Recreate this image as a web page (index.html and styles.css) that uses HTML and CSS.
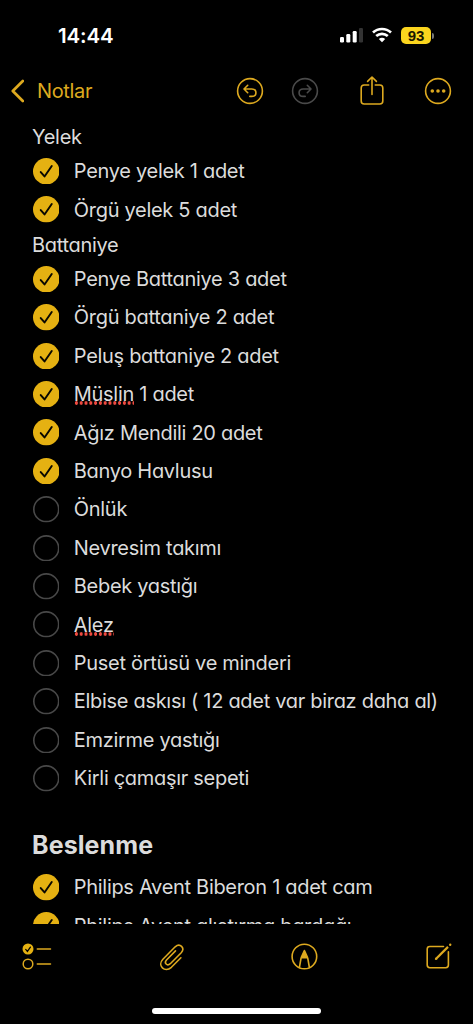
FILE: index.html
```html
<!DOCTYPE html>
<html lang="tr">
<head>
<meta charset="utf-8">
<title>Notlar</title>
<link rel="stylesheet" href="styles.css">
</head>
<body>
<svg width="0" height="0" class="defs">
  <symbol id="done" viewBox="0 0 26 26"><circle cx="13" cy="13" r="13" fill="#e5b112"/><path d="M7.6 13.8l3.7 4.3 7.1-10.3" fill="none" stroke="#0a0800" stroke-width="1.9" stroke-linecap="round" stroke-linejoin="round"/></symbol>
  <symbol id="open" viewBox="0 0 26 26"><circle cx="13" cy="13" r="12.2" fill="none" stroke="#484848" stroke-width="1.6"/></symbol>
</svg>
<div class="screen">
  <header class="status">
    <span class="clock">14:44</span>
    <div class="indicators">
      <svg class="signal" width="24" height="16" viewBox="0 0 24 16" fill="#fff"><rect x="1" y="10" width="4" height="5.5" rx="1.2"/><rect x="7.3" y="7" width="4" height="8.5" rx="1.2"/><rect x="13.7" y="4" width="4" height="11.5" rx="1.2"/><rect x="20" y="1" width="4" height="14.5" rx="1.2" fill="#333"/></svg>
      <svg class="wifi" width="20" height="16" viewBox="0 0 20 16" fill="none" stroke="#fff" stroke-width="2.7"><path d="M1 5.5C6.1.8 13.9.8 19 5.5M4.2 9.1c3.4-3 8.2-3 11.6 0"/><path d="M6.8 11.9c2-1.6 4.4-1.6 6.4 0L10 15.3z" fill="#fff" stroke="none"/></svg>
      <div class="battery"><span class="level">93</span><i class="cap"></i></div>
    </div>
  </header>
  <nav class="navbar">
    <svg class="back" width="14" height="24" viewBox="0 0 14 24"><path d="M12.8 2L2.8 12l10 10" fill="none" stroke="#dda91f" stroke-width="2.7" stroke-linecap="round" stroke-linejoin="round"/></svg>
    <span class="title">Notlar</span>
    <svg class="undo" width="28" height="28" viewBox="0 0 28 28"><g fill="none" stroke="#dda91f" stroke-width="1.6" stroke-linecap="round" stroke-linejoin="round"><circle cx="14" cy="14" r="12.4"/><path d="M11.7 8.3L8 12l3.7 3.7M8.3 12h7.5c5.5 0 5.5 7.4 0 7.4h-2"/></g></svg>
    <svg class="redo" width="28" height="28" viewBox="0 0 28 28"><g fill="none" stroke="#4a4a4a" stroke-width="1.6" stroke-linecap="round" stroke-linejoin="round"><circle cx="14" cy="14" r="12.4"/><path d="M16.3 8.3L20 12l-3.7 3.7M19.7 12h-7.5c-5.5 0-5.5 7.4 0 7.4h2"/></g></svg>
    <svg class="share" width="26" height="32" viewBox="0 0 26 32"><path d="M9.7 10H5.2Q2.2 10 2.2 13v13q0 3 3 3h15.6q3 0 3-3V13q0-3-3-3h-4.5M13 19.5V2.5M8.6 6.4L13 2l4.4 4.4" fill="none" stroke="#dda91f" stroke-width="1.6" stroke-linecap="round" stroke-linejoin="round"/></svg>
    <svg class="more" width="28" height="28" viewBox="0 0 28 28"><circle cx="14" cy="14" r="12.4" fill="none" stroke="#dda91f" stroke-width="1.6"/><g fill="#dda91f"><circle cx="8.3" cy="14" r="1.8"/><circle cx="14" cy="14" r="1.8"/><circle cx="19.7" cy="14" r="1.8"/></g></svg>
  </nav>
  <main class="note">
    <p class="label">Yelek</p>
    <ul class="list">
      <li class="item"><svg class="check"><use href="#done"/></svg><span>Penye yelek 1 adet</span></li>
      <li class="item"><svg class="check"><use href="#done"/></svg><span>Örgü yelek 5 adet</span></li>
    </ul>
    <p class="label">Battaniye</p>
    <ul class="list">
      <li class="item"><svg class="check"><use href="#done"/></svg><span>Penye Battaniye 3 adet</span></li>
      <li class="item"><svg class="check"><use href="#done"/></svg><span>Örgü battaniye 2 adet</span></li>
      <li class="item"><svg class="check"><use href="#done"/></svg><span>Peluş battaniye 2 adet</span></li>
      <li class="item"><svg class="check"><use href="#done"/></svg><span><span class="typo">Müslin</span> 1 adet</span></li>
      <li class="item"><svg class="check"><use href="#done"/></svg><span>Ağız Mendili 20 adet</span></li>
      <li class="item"><svg class="check"><use href="#done"/></svg><span>Banyo Havlusu</span></li>
      <li class="item"><svg class="check"><use href="#open"/></svg><span>Önlük</span></li>
      <li class="item"><svg class="check"><use href="#open"/></svg><span>Nevresim takımı</span></li>
      <li class="item"><svg class="check"><use href="#open"/></svg><span>Bebek yastığı</span></li>
      <li class="item"><svg class="check"><use href="#open"/></svg><span><span class="typo">Alez</span></span></li>
      <li class="item"><svg class="check"><use href="#open"/></svg><span>Puset örtüsü ve minderi</span></li>
      <li class="item"><svg class="check"><use href="#open"/></svg><span>Elbise askısı ( 12 adet var biraz daha al)</span></li>
      <li class="item"><svg class="check"><use href="#open"/></svg><span>Emzirme yastığı</span></li>
      <li class="item"><svg class="check"><use href="#open"/></svg><span>Kirli çamaşır sepeti</span></li>
    </ul>
    <h2 class="heading">Beslenme</h2>
    <ul class="list">
      <li class="item"><svg class="check"><use href="#done"/></svg><span>Philips Avent Biberon 1 adet cam</span></li>
      <li class="item"><svg class="check"><use href="#done"/></svg><span>Philips Avent alıştırma bardağı</span></li>
    </ul>
  </main>
  <footer class="toolbar">
    <svg width="30" height="28" viewBox="0 0 30 28"><circle cx="6" cy="6" r="5.5" fill="#e5b112"/><path d="M3.7 6.4l1.7 2 3-4.3" fill="none" stroke="#000" stroke-width="1.2" stroke-linecap="round"/><g fill="none" stroke="#dda91f" stroke-width="1.5" stroke-linecap="round"><circle cx="6" cy="21" r="4.8"/><path d="M15.3 6h13.2M15.3 21h13.2"/></g></svg>
    <svg width="28" height="30" viewBox="0 0 28 30"><path d="M22.9 15.8L13.4 25.3C6.7 31.3-1.1 23.6 4.9 17.2L17.2 4.8c4.8-4.3 10.2 1.3 6 6L12.3 21.7c-3.2 2.8-6.6-.7-3.8-3.7l9-9.1" fill="none" stroke="#dda91f" stroke-width="1.6" stroke-linecap="round" stroke-linejoin="round"/></svg>
    <svg width="28" height="28" viewBox="0 0 28 28"><g fill="none" stroke="#dda91f" stroke-width="1.6" stroke-linejoin="round"><circle cx="13.4" cy="13.5" r="12.3"/><path d="M8.4 24.5l1.7-9.7h6.6l1.7 9.7M10.1 14.8l3.3-7.3 3.3 7.3"/></g><path d="M13.4 7l-3.5 8h7z" fill="#dda91f"/></svg>
    <svg width="28" height="28" viewBox="0 0 28 28"><g fill="none" stroke="#dda91f" stroke-width="1.6" stroke-linecap="round" stroke-linejoin="round"><path d="M18.5 3.5H4.8Q2.2 3.5 2.2 6.1v16Q2.2 24.7 4.8 24.7h16q2.6 0 2.6-2.6V8.7"/></g><path d="M10.6 16.3L23 3.9" stroke="#dda91f" stroke-width="2.2"/><path d="M9.8 17.1l.8-2.7 2 1.9z" fill="#dda91f"/><circle cx="25.2" cy="1.8" r="1.2" fill="#dda91f"/></svg>
  </footer>
  <div class="home"></div>
</div>
</body>
</html>
```
FILE: styles.css
```css
* { box-sizing: border-box; }
body { margin: 0; background: #000; font-family: Inter, "Noto Sans", sans-serif; }
.defs { display: block; }
.screen { width: 473px; height: 1024px; overflow: hidden; display: flex; flex-direction: column; background: #000; }
.status { height: 66px; flex: none; display: flex; justify-content: space-between; padding: 23px 39px 0 58px; }
.clock { color: #fff; font-size: 20.5px; line-height: 25px; font-weight: 600; letter-spacing: -.1px; }
.indicators { display: flex; align-items: flex-start; padding-top: 4px; }
.wifi { margin-left: 9px; }
.battery { display: flex; align-items: center; margin-left: 9px; }
.level { width: 30px; height: 17px; border-radius: 5px; background: #fbd51e; color: #191500; font-family: "Liberation Sans", Arial, sans-serif; font-size: 15px; font-weight: 700; line-height: 17px; text-align: center; }
.cap { width: 2px; height: 6px; margin-left: 1px; border-radius: 0 2px 2px 0; background: #777; }
.navbar { height: 50px; flex: none; display: flex; align-items: center; padding-left: 10px; }
.title { width: 200px; margin-left: 13px; color: #dda91f; font-size: 20px; line-height: 24px; letter-spacing: -.35px; }
.undo { margin-left: -1px; }
.redo { margin-left: 27px; }
.share { margin-left: 40px; }
.more { margin-left: 39px; }
.note { height: 808px; flex: none; overflow: hidden; padding: 5px 0 0 32px; color: #dcdcdc; font-size: 20px; letter-spacing: -.3px; font-feature-settings: "cv11"; white-space: nowrap; }
.label { height: 31px; margin: 0; padding-top: 1px; line-height: 31px; }
.list { margin: 0; padding: 0; list-style: none; }
.item { height: 38.42px; display: flex; align-items: center; gap: 14.8px; line-height: 26px; }
.check { width: 26.5px; height: 26.5px; flex: none; margin-left: .5px; }
.typo { background: radial-gradient(circle at center, #f04a40 1.5px, transparent 2px) 0 calc(100% - 1px) / 4.8px 4px repeat-x; }
.heading { height: 70.6px; margin: 0; padding-top: 31px; font-size: 25px; line-height: 32px; font-weight: 700; letter-spacing: .1px; font-feature-settings: normal; }
.toolbar { height: 66px; flex: none; display: flex; align-items: center; justify-content: space-between; padding: 0 20px 0 22px; }
.home { width: 169px; height: 6px; flex: none; margin: 18px 0 0 152px; border-radius: 3px; background: #fff; }
```
